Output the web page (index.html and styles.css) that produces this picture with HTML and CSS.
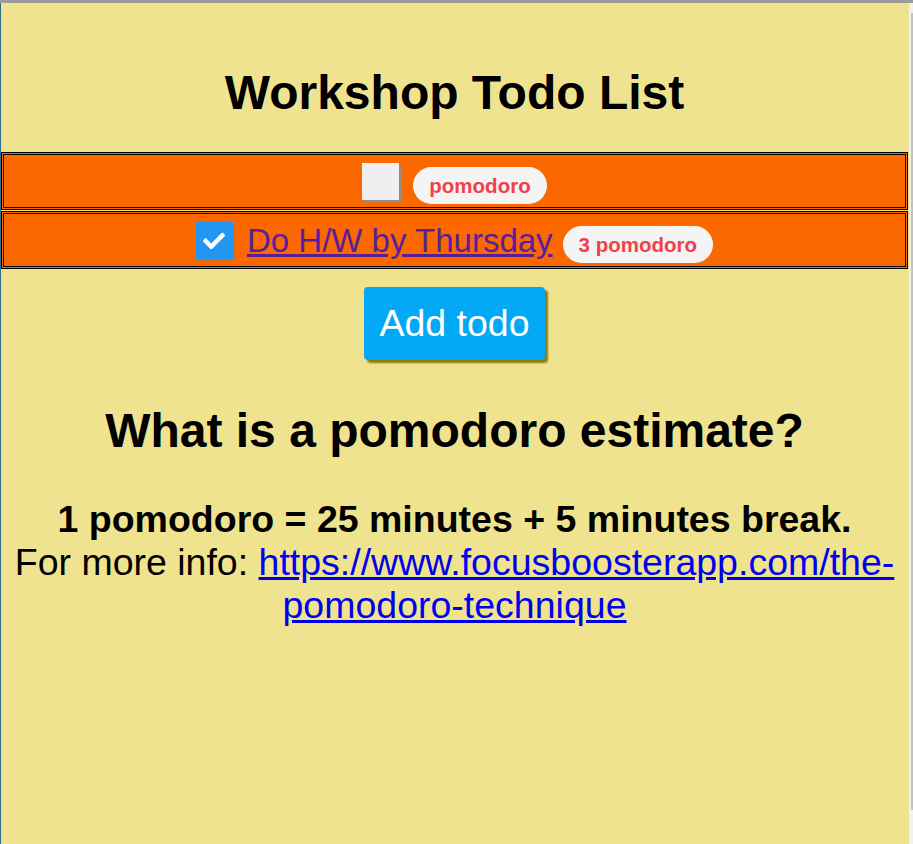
FILE: index.html
```html
<!DOCTYPE html>
<html lang="en">
<head>
<meta charset="utf-8">
<title>Workshop Todo List</title>
<link rel="stylesheet" href="styles.css">
</head>
<body>
<div class="window">
  <div class="content">
    <h1 class="title">Workshop Todo List</h1>
    <ul class="todos">
      <li class="todo">
        <span class="check"></span>
        <span class="pill">pomodoro</span>
      </li>
      <li class="todo">
        <span class="check checked">
          <svg viewBox="0 0 512 512" width="22" height="22"><path fill="#fff" d="M173.9 439.4l-166.4-166.4c-10-10-10-26.2 0-36.2l36.2-36.2c10-10 26.2-10 36.2 0L192 312.7 432.1 72.6c10-10 26.2-10 36.2 0l36.2 36.2c10 10 10 26.2 0 36.2l-294.4 294.4c-10 10-26.2 10-36.2 0z"/></svg>
        </span>
        <a class="todo-link" href="#">Do H/W by Thursday</a>
        <span class="pill">3 pomodoro</span>
      </li>
    </ul>
    <div class="actions">
      <button class="add-btn" type="button">Add todo</button>
    </div>
    <h2 class="subtitle">What is a pomodoro estimate?</h2>
    <p class="info"><strong>1 pomodoro = 25 minutes + 5 minutes break.</strong><br>For more info: <a class="info-link" href="#">https://www.focusboosterapp.com/the-pomodoro-technique</a></p>
  </div>
  <div class="scrollbar"><div class="thumb"></div></div>
</div>
</body>
</html>
```
FILE: styles.css
```css
html, body {
  margin: 0;
  padding: 0;
  height: 100%;
  background: #f0e58f;
}
body {
  font-family: "Liberation Sans", Arial, sans-serif;
  overflow: hidden;
}
.window {
  display: flex;
  height: 841px;
  border-top: 3px solid #9c9c9a;
  background: #f0e38f;
}
.content {
  flex: 1;
  border-left: 1px solid #2b6d93;
  text-align: center;
  color: #000;
  padding-right: 1px;
}
.scrollbar {
  width: 4px;
  background: #f1f1f1;
  display: flex;
  justify-content: flex-end;
  padding-top: 10px;
  box-sizing: border-box;
}
.thumb {
  width: 2px;
  height: 797px;
  background: #c2c2c2;
}
.title {
  font-size: 48px;
  line-height: 56px;
  font-weight: bold;
  margin: 62px 0 31px;
}
.todos {
  list-style: none;
  margin: 0;
  padding: 0;
}
.todo {
  display: flex;
  align-items: center;
  justify-content: center;
  height: 58px;
  box-sizing: border-box;
  border: 3px double #000;
  background: #fb6800;
  margin-bottom: 1px;
}
.check {
  width: 37px;
  height: 37px;
  background: #efefef;
  box-shadow: 2px 2px 1px #8f8f8f;
  display: flex;
  align-items: center;
  justify-content: center;
  margin-right: 14px;
}
.check.checked {
  background: #2196f3;
  box-shadow: 1px 1px 2px rgba(120, 120, 120, 0.6);
  margin-right: 14px;
}
.check svg {
  margin-top: 2px;
}
.todo-link {
  font-size: 33px;
  line-height: 38px;
  color: #5a1d9c;
  text-decoration: underline;
  margin-right: 10px;
  margin-top: 2px;
}
.pill {
  background: #f5f4f4;
  color: #f0414b;
  font-weight: bold;
  font-size: 20.5px;
  height: 37px;
  line-height: 37px;
  padding: 0 16px;
  border-radius: 19px;
  margin-top: 8px;
}
.actions {
  margin-top: 18px;
}
.add-btn {
  font-family: "Liberation Sans", Arial, sans-serif;
  font-size: 37.5px;
  line-height: 43px;
  padding: 15px;
  border: none;
  border-radius: 4px;
  background: #03a9f4;
  color: #fff;
  box-shadow: 3px 3px 2px #8a7a14;
}
.subtitle {
  font-size: 48px;
  line-height: 56px;
  font-weight: bold;
  margin: 43px 0 39px;
}
.info {
  font-size: 37.5px;
  line-height: 43px;
  margin: 0;
}
.info-link {
  color: #0000ee;
}
```
